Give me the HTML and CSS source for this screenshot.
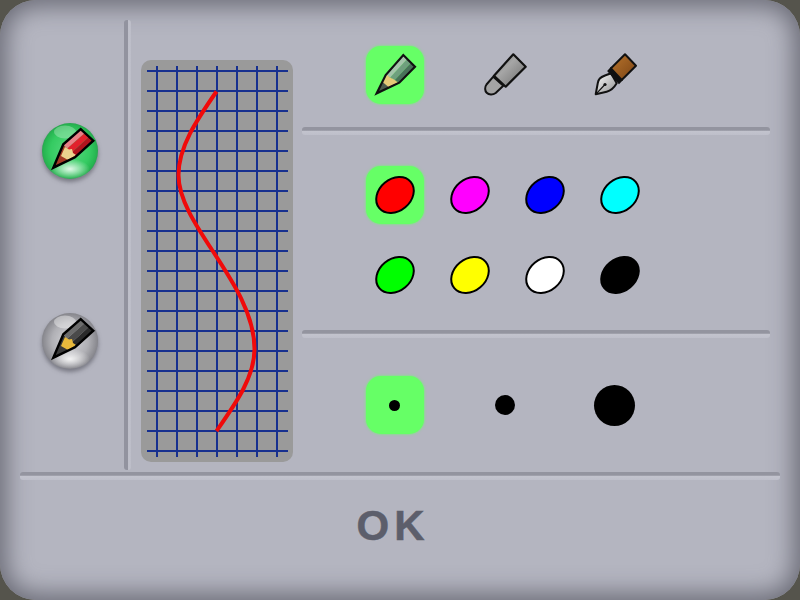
FILE: index.html
```html
<!DOCTYPE html>
<html lang="en">
<head>
<meta charset="utf-8">
<title>Pen settings</title>
<link rel="stylesheet" href="styles.css">
</head>
<body>
<div class="frame">
  <svg class="defs" width="0" height="0" aria-hidden="true">
    <defs>
      <radialGradient id="ballGreen" cx="50%" cy="50%" r="50%">
        <stop offset="0" stop-color="#58d87f"/>
        <stop offset="0.7" stop-color="#35cb62"/>
        <stop offset="0.93" stop-color="#27b651"/>
        <stop offset="1" stop-color="#2aa550"/>
      </radialGradient>
      <radialGradient id="ballGrey" cx="50%" cy="50%" r="50%">
        <stop offset="0" stop-color="#d6d6da"/>
        <stop offset="0.65" stop-color="#b0b0b5"/>
        <stop offset="0.93" stop-color="#8e8e94"/>
        <stop offset="1" stop-color="#85858b"/>
      </radialGradient>
      <radialGradient id="glow" cx="50%" cy="50%" r="50%">
        <stop offset="0" stop-color="#ffffff" stop-opacity="0.85"/>
        <stop offset="1" stop-color="#ffffff" stop-opacity="0"/>
      </radialGradient>
      <linearGradient id="marker" x1="0" y1="0" x2="1" y2="1">
        <stop offset="0" stop-color="#6f6f6f"/>
        <stop offset="0.4" stop-color="#a6a6a6"/>
        <stop offset="1" stop-color="#6a6a6a"/>
      </linearGradient>
      <linearGradient id="barrel" x1="0" y1="0" x2="1" y2="1">
        <stop offset="0" stop-color="#b9752c"/>
        <stop offset="1" stop-color="#7a4315"/>
      </linearGradient>
      <linearGradient id="nib" x1="0" y1="0" x2="1" y2="1">
        <stop offset="0" stop-color="#ffffff"/>
        <stop offset="1" stop-color="#8d8d8d"/>
      </linearGradient>
    </defs>
  </svg>

  <div class="top">
    <div class="modes">
      <button class="ball" type="button" aria-label="Colour pen">
        <svg width="58" height="58" viewBox="0 0 58 58">
          <circle cx="28" cy="28" r="28" fill="url(#ballGreen)"/>
          <ellipse cx="28" cy="46" rx="20" ry="10" fill="url(#glow)"/>
          <ellipse cx="23" cy="9" rx="11" ry="6.500" fill="#ffffff" opacity="0.28"/>
          <polygon points="11.3,44.7 21.3,21.3 33,34.3" fill="#a33a24"/>
          <polygon points="21.3,21.3 38.7,6 42.9,9.9 25.2,25.6" fill="#ea8088"/>
          <polygon points="25.2,25.6 42.9,9.9 47.1,13.8 29.1,30" fill="#e2212c"/>
          <polygon points="29.1,30 47.1,13.8 51.3,17.7 33,34.3" fill="#b0141e"/>
          <polygon points="19,33 23,24 27,26.500 30,26 31,30 34,32 26,37" fill="#ecd38e"/>
          <polygon points="11.3,44.7 21.3,21.3 38.7,6 51.3,17.7 33,34.3" fill="none" stroke="#000" stroke-width="2.400"/>
        </svg>
      </button>
      <button class="ball" type="button" aria-label="Black pen">
        <svg width="58" height="58" viewBox="0 0 58 58">
          <circle cx="28" cy="28" r="28" fill="url(#ballGrey)"/>
          <ellipse cx="28" cy="46" rx="20" ry="10" fill="url(#glow)"/>
          <ellipse cx="23" cy="9" rx="11" ry="6.500" fill="#ffffff" opacity="0.4"/>
          <polygon points="11.3,44.7 21.3,21.3 33,34.3" fill="#3a3a3a"/>
          <polygon points="21.3,21.3 38.7,6 42.9,9.9 25.2,25.6" fill="#6c6c6c"/>
          <polygon points="25.2,25.6 42.9,9.9 47.1,13.8 29.1,30" fill="#4a4a4a"/>
          <polygon points="29.1,30 47.1,13.8 51.3,17.7 33,34.3" fill="#2a2a2a"/>
          <polygon points="19,33 23,24 27,26.500 30,26 31,30 34,32 26,37" fill="#e8b93c"/>
          <polygon points="11.3,44.7 21.3,21.3 38.7,6 51.3,17.7 33,34.3" fill="none" stroke="#000" stroke-width="2.400"/>
        </svg>
      </button>
    </div>
    <div class="vrule"></div>
    <div class="preview">
      <svg width="152" height="402" viewBox="141 60 152 402">
        <path class="grid" d="M157 66V457M177 66V457M197 66V457M217 66V457M237 66V457M257 66V457M277 66V457M147 71H288M147 91H288M147 111H288M147 131H288M147 151H288M147 171H288M147 191H288M147 211H288M147 231H288M147 251H288M147 271H288M147 291H288M147 311H288M147 331H288M147 351H288M147 371H288M147 391H288M147 411H288M147 431H288M147 451H288"/>
        <path class="stroke" d="M216.500 91.500C196 121 178.500 147 178.500 175C178.500 226 254.500 284 254.500 349C254.500 377 236 403 216.500 431"/>
      </svg>
    </div>
    <div class="options">
      <div class="tools">
        <div class="cell selected">
          <svg width="58" height="58" viewBox="0 0 58 58">
            <polygon points="10.700,47.300 19.700,29 33.300,36.700" fill="#4c5a4c"/>
            <polygon points="19.700,29 37.300,9 41.200,12.900 24.200,31.600" fill="#a5c4ab"/>
            <polygon points="24.200,31.600 41.200,12.900 45.100,16.800 28.800,34.100" fill="#6f9f7e"/>
            <polygon points="28.800,34.100 45.100,16.800 49,20.700 33.300,36.700" fill="#487259"/>
            <polygon points="16,35.500 20.500,28.500 24,31.500 28,33.500 32,36.500 22.500,41" fill="#e6c977"/>
            <polygon points="10.700,47.300 19.700,29 37.300,9 49,20.700 33.300,36.700" fill="none" stroke="#111" stroke-width="2.200"/>
          </svg>
        </div>
        <div class="cell">
          <svg width="58" height="58" viewBox="0 0 58 58">
            <path d="M17.300 30.700L10.500 38.500C8.500 41 8.800 44.800 10.700 46.800C12.800 49 16.800 49.200 19.700 47L27.300 39.700Z" fill="#a4a4a4" stroke="#111" stroke-width="2"/>
            <polygon points="37.300,8.300 49.700,20.700 29.700,40.700 18,29.700" fill="url(#marker)" stroke="#111" stroke-width="2.200" stroke-linejoin="round"/>
          </svg>
        </div>
        <div class="cell">
          <svg width="58" height="58" viewBox="0 0 58 58">
            <path d="M19 29.500C14 31.500 12.500 33 11.800 37L9.700 48.300L20.700 45.700C24 45 27 43.500 30.700 37.300L25 27.300Z" fill="url(#nib)" stroke="#111" stroke-width="2" stroke-linejoin="round"/>
            <path d="M9.700 48.300L18.500 39" class="slit"/>
            <circle cx="19" cy="38.500" r="1.600" fill="#111"/>
            <polygon points="22.500,25 33,36.700 35.700,34 25,22.300" fill="#111" stroke="#111" stroke-width="2"/>
            <polygon points="39,8.300 50,19.700 35.700,34 25,22.300" fill="url(#barrel)" stroke="#111" stroke-width="2" stroke-linejoin="round"/>
          </svg>
        </div>
      </div>
      <div class="hrule tools-rule"></div>
      <div class="colors">
        <div class="cell selected"><svg width="58" height="58" viewBox="0 0 58 58"><ellipse class="blob" cx="29" cy="29" rx="20.500" ry="16" transform="rotate(-40 29 29)" fill="#ff0000"/></svg></div>
        <div class="cell"><svg width="58" height="58" viewBox="0 0 58 58"><ellipse class="blob" cx="29" cy="29" rx="20.500" ry="16" transform="rotate(-40 29 29)" fill="#ff00ff"/></svg></div>
        <div class="cell"><svg width="58" height="58" viewBox="0 0 58 58"><ellipse class="blob" cx="29" cy="29" rx="20.500" ry="16" transform="rotate(-40 29 29)" fill="#0000ff"/></svg></div>
        <div class="cell"><svg width="58" height="58" viewBox="0 0 58 58"><ellipse class="blob" cx="29" cy="29" rx="20.500" ry="16" transform="rotate(-40 29 29)" fill="#00ffff"/></svg></div>
        <div class="cell"><svg width="58" height="58" viewBox="0 0 58 58"><ellipse class="blob" cx="29" cy="29" rx="20.500" ry="16" transform="rotate(-40 29 29)" fill="#00ff00"/></svg></div>
        <div class="cell"><svg width="58" height="58" viewBox="0 0 58 58"><ellipse class="blob" cx="29" cy="29" rx="20.500" ry="16" transform="rotate(-40 29 29)" fill="#ffff00"/></svg></div>
        <div class="cell"><svg width="58" height="58" viewBox="0 0 58 58"><ellipse class="blob" cx="29" cy="29" rx="20.500" ry="16" transform="rotate(-40 29 29)" fill="#ffffff"/></svg></div>
        <div class="cell"><svg width="58" height="58" viewBox="0 0 58 58"><ellipse class="blob" cx="29" cy="29" rx="20.500" ry="16" transform="rotate(-40 29 29)" fill="#000000"/></svg></div>
      </div>
      <div class="hrule colors-rule"></div>
      <div class="sizes">
        <div class="cell selected"><span class="dot dot-s"></span></div>
        <div class="cell"><span class="dot dot-m"></span></div>
        <div class="cell"><span class="dot dot-l"></span></div>
      </div>
    </div>
  </div>
  <div class="hrule bottom-rule"></div>
  <div class="ok">OK</div>
</div>
</body>
</html>
```

FILE: styles.css
```css
* { box-sizing: border-box; }
html, body { margin: 0; padding: 0; background: #55544c; }
.defs { position: absolute; }
svg { display: block; }

.frame {
  width: 800px;
  height: 600px;
  padding: 20px 20px 0;
  display: flex;
  flex-direction: column;
  background: #b4b5c0;
  border-radius: 36px;
  overflow: hidden;
  box-shadow: inset 0 0 24px 6px #696a75;
}

.top { display: flex; height: 452px; }

.modes {
  width: 104px;
  padding: 103px 0 0 22px;
  display: flex;
  flex-direction: column;
  gap: 132px;
}
.ball {
  width: 58px;
  height: 58px;
  padding: 0;
  border: 0;
  background: none;
  filter: drop-shadow(0 3px 2px rgba(60, 60, 70, 0.5));
}

.vrule {
  width: 7px;
  height: 450px;
  border-radius: 3px;
  background: linear-gradient(to right, #92939f 0, #92939f 50%, #c0c1cb 65%, #bcbdc8 100%);
}

.preview {
  width: 152px;
  height: 402px;
  margin: 40px 0 0 10px;
  background: #9a9a9a;
  border-radius: 10px;
  overflow: hidden;
}
.grid { fill: none; stroke: #17308f; stroke-width: 2; }
.stroke { fill: none; stroke: #f00a0a; stroke-width: 4; }

.options { width: 468px; margin-left: 9px; padding-top: 26px; }

.hrule {
  height: 8px;
  flex: none;
  border-radius: 3px;
  background: linear-gradient(to bottom, #93949f 0, #93949f 40%, #c2c3cd 55%, #bebfca 100%);
}
.tools-rule { margin-top: 23px; }
.colors-rule { margin-top: 26px; }

.tools, .sizes {
  display: flex;
  gap: 52px;
  padding-left: 64px;
}
.colors {
  margin-top: 31px;
  padding-left: 64px;
  display: grid;
  grid-template-columns: repeat(4, 58px);
  column-gap: 17px;
  row-gap: 22px;
}
.sizes { margin-top: 38px; }

.cell {
  width: 58px;
  height: 58px;
  border-radius: 15px;
  display: flex;
  align-items: center;
  justify-content: center;
}
.selected { background: #66ff66; box-shadow: 0 0 3px #66ff66; }

.blob { stroke: #000; stroke-width: 2; }
.slit { stroke: #111; stroke-width: 1.2; fill: none; }

.dot { display: block; border-radius: 50%; background: #000; margin-right: 1px; }
.dot-s { width: 11px; height: 11px; }
.dot-m { width: 20px; height: 20px; }
.dot-l { width: 41px; height: 41px; }

.ok {
  margin-top: 23px;
  text-align: center;
  font-family: "Liberation Sans", Arial, sans-serif;
  font-weight: 700;
  font-size: 42px;
  line-height: 46px;
  letter-spacing: 5px;
  color: #5c5e6b;
  -webkit-text-stroke: 0.5px #5c5e6b;
  padding-right: 14px;
}
```
